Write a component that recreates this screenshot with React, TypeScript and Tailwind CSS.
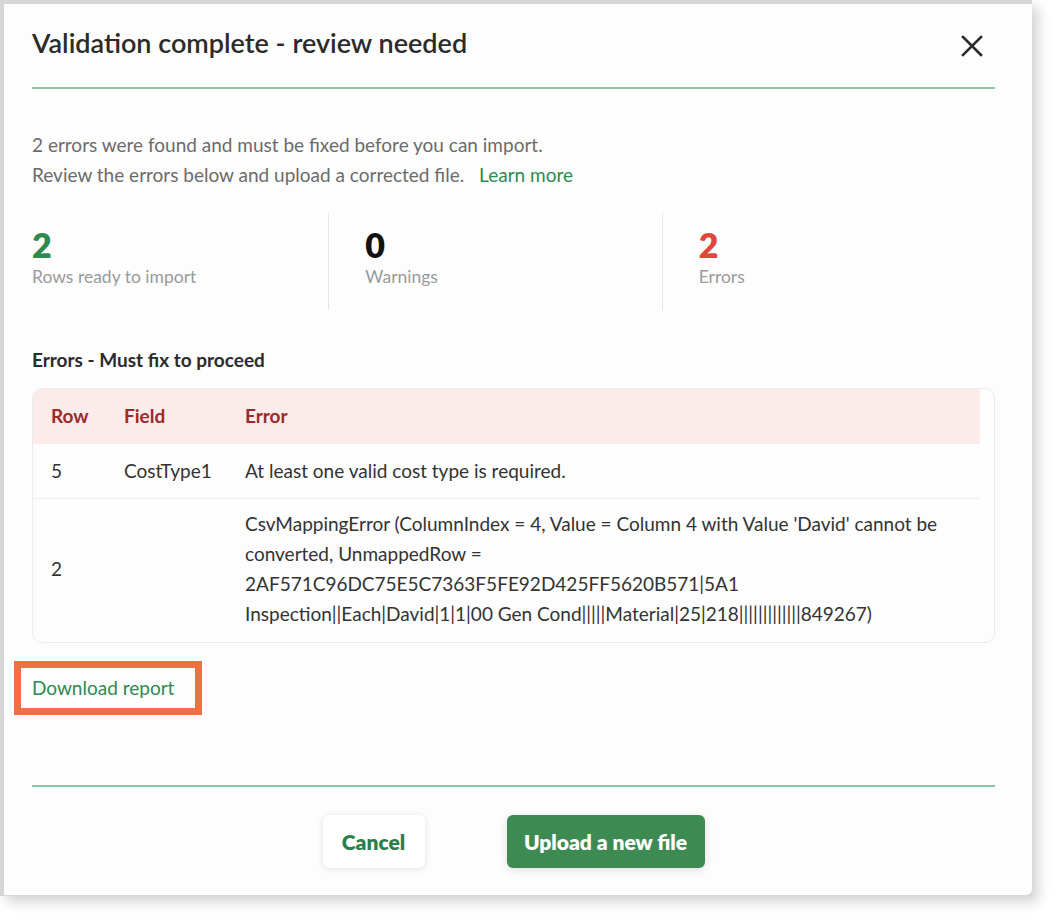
import React from "react";

function Stat({ value, label, color, first }: { value: string; label: string; color: string; first?: boolean }) {
  return (
    <div className={"flex-1 basis-0 flex flex-col pt-[12px] " + (first ? "pl-0 pr-9" : "px-9 border-l border-[#e6e6e6]")}>
      <div className={"text-[34px] leading-[40px] font-extrabold " + color}>{value}</div>
      <div className="text-[17.5px] leading-[24px] text-[#9a9a9a]">{label}</div>
    </div>
  );
}

export default function App() {
  return (
    <div className="w-[1056px] h-[920px] bg-white" style={{ fontFamily: "Lato, 'Open Sans', sans-serif" }}>
      <div className="w-[1032px] h-[896px] bg-[#d6d6d6] pt-[4px] pl-[4px] shadow-[6px_6px_12px_rgba(0,0,0,0.18)]">
        <div className="w-[1028px] h-[891px] bg-[#fdfdfd] rounded-br-[6px] flex flex-col pl-[28px] pr-[37px]">
          {/* Header */}
          <div className="flex items-start justify-between pt-[21px] h-[85px] border-b-[2px] border-[#8fc5a3]">
            <h1 className="text-[27px] leading-[36px] font-semibold text-[#2b2b2b]">Validation complete - review needed</h1>
            <button className="mt-[9px] mr-[11px] text-[#2b2b2b]" aria-label="Close">
              <svg width="24" height="24" viewBox="0 0 24 24" fill="none" stroke="currentColor" strokeWidth="2.6" strokeLinecap="square">
                <path d="M3 3L21 21M21 3L3 21" />
              </svg>
            </button>
          </div>

          {/* Body */}
          <div className="pt-[41px] text-[19px] leading-[30px] text-[#6b6b6b]">
            <p>2 errors were found and must be fixed before you can import.</p>
            <p>
              Review the errors below and upload a corrected file.{" "}
              <a className="ml-[10px] text-[#2e8a4e]">Learn more</a>
            </p>
          </div>

          {/* Stats */}
          <div className="flex mt-[23px] h-[97px]">
            <Stat value="2" label="Rows ready to import" color="text-[#2f8a50]" first />
            <Stat value="0" label="Warnings" color="text-[#111111]" />
            <Stat value="2" label="Errors" color="text-[#e0463b]" />
          </div>

          {/* Errors heading */}
          <div className="mt-[38px] text-[19px] leading-[24px] font-bold text-[#2b2b2b]">Errors - Must fix to proceed</div>

          {/* Table */}
          <div className="mt-[16px] border border-[#ececec] rounded-[10px] overflow-hidden pr-[14px] bg-[#fdfdfd]">
            <table className="w-full border-collapse text-[19px] leading-[30px] text-[#333333]">
              <thead>
                <tr className="bg-[#fcebeb] text-[#9c2a28] text-left">
                  <th className="w-[73px] pl-[18px] pt-[12px] pb-[13px] font-bold">Row</th>
                  <th className="w-[121px] pl-[18px] pt-[12px] pb-[13px] font-bold">Field</th>
                  <th className="pl-[18px] pr-[16px] pt-[12px] pb-[13px] font-bold">Error</th>
                </tr>
              </thead>
              <tbody>
                <tr>
                  <td className="pl-[18px] py-[12px] align-middle">5</td>
                  <td className="pl-[18px] py-[12px] align-middle">CostType1</td>
                  <td className="pl-[18px] pr-[16px] py-[12px] align-middle">At least one valid cost type is required.</td>
                </tr>
                <tr className="border-t border-[#efefef]">
                  <td className="pl-[18px] pt-[10px] pb-[13px] align-middle">2</td>
                  <td className="pl-[18px] pt-[10px] pb-[13px] align-middle"></td>
                  <td className="pl-[18px] pr-[16px] pt-[10px] pb-[13px] align-middle">
                    CsvMappingError (ColumnIndex = 4, Value = Column 4 with Value 'David' cannot be converted, UnmappedRow =
                    2AF571C96DC75E5C7363F5FE92D425FF5620B571|5A1
                    <br />
                    Inspection||Each|David|1|1|00 Gen Cond|||||Material|25|218|||||||||||||849267)
                  </td>
                </tr>
              </tbody>
            </table>
          </div>

          {/* Download report */}
          <div className="mt-[30px] h-[30px] flex items-center">
            <span className="relative inline-block text-[19px] leading-[24px] text-[#2e8a4e]">
              Download report
              <span className="absolute left-[-18px] top-[-15px] w-[188px] h-[54px] border-[7px] border-[#ef7044] pointer-events-none" />
            </span>
          </div>

          {/* Footer */}
          <div className="mt-[82px] border-t-[2px] border-[#8fc5a3] flex justify-center gap-[82px] pt-[28px]">
            <button className="w-[102px] h-[53px] rounded-[6px] bg-white shadow-[0_1px_6px_rgba(0,0,0,0.12)] text-[21px] font-extrabold text-[#2e7d4c]">
              Cancel
            </button>
            <button className="w-[198px] h-[53px] rounded-[6px] bg-[#3d8b53] shadow-[0_2px_8px_rgba(0,0,0,0.12)] text-[21px] font-extrabold text-white">
              Upload a new file
            </button>
          </div>
        </div>
      </div>
    </div>
  );
}
